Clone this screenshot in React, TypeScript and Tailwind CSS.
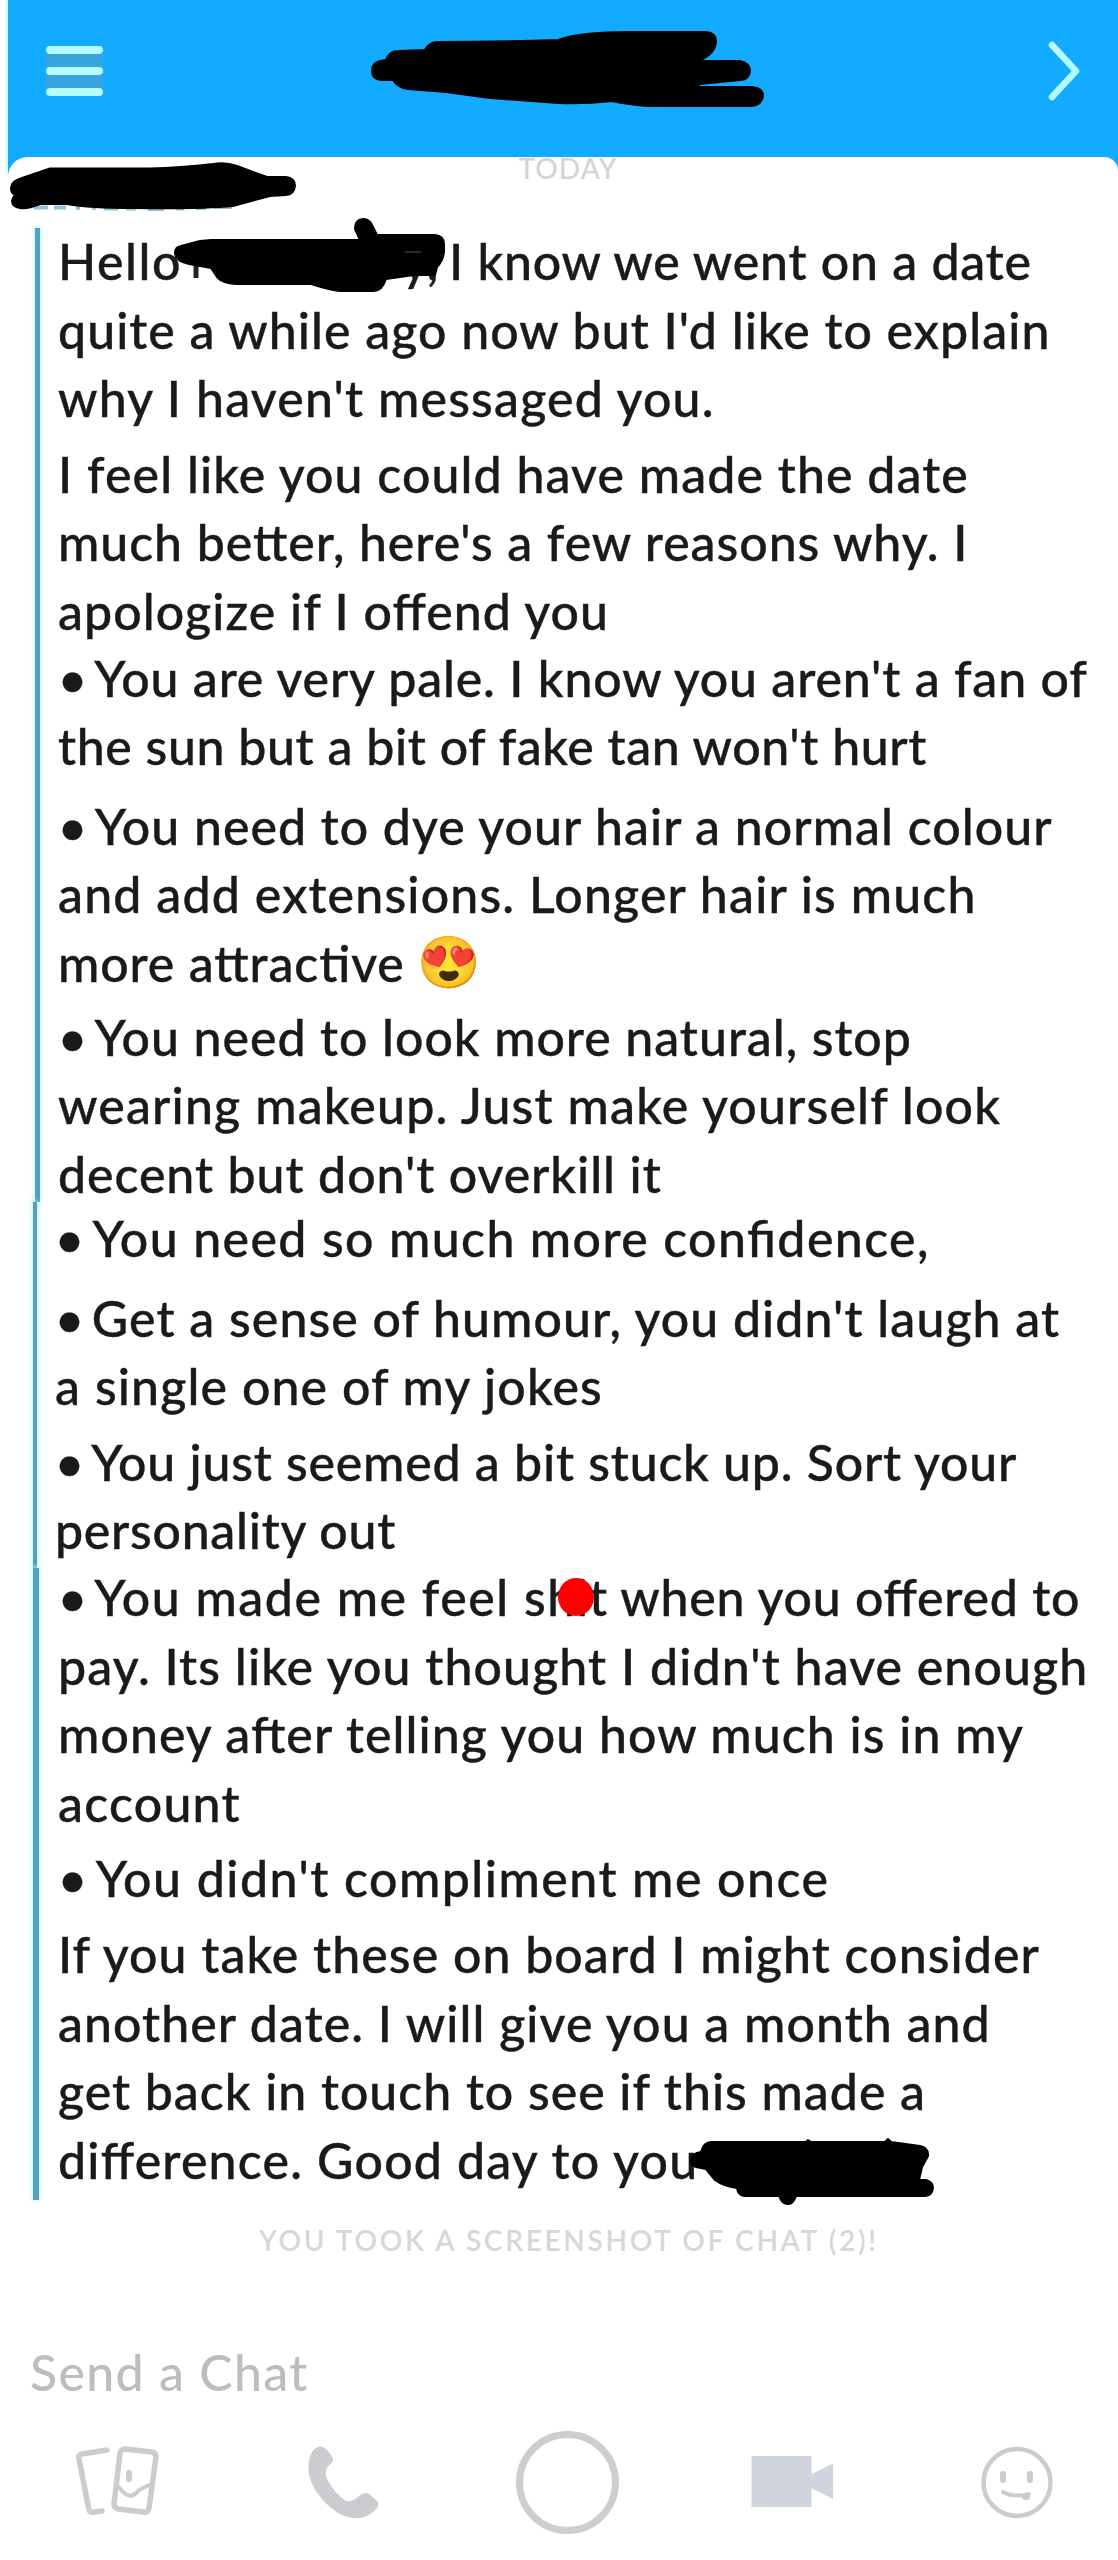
import type { ReactNode } from "react";

type LineData = { text: ReactNode; tracking: string; bullet?: boolean };
type Paragraph = { gap: string; lines: LineData[] };

const opening: Paragraph[] = [
  {
    gap: "-mt-[1px]",
    lines: [
      {
        text: (
          <span className="flex">
            <span className="w-[344px] tracking-[1.5px]">Hello</span>
            <span className="w-[47px]">y,</span>
            <span>I know we went on a date</span>
          </span>
        ),
        tracking: "tracking-[0.8px]",
      },
      { text: "quite a while ago now but I'd like to explain", tracking: "tracking-[1.05px]" },
      { text: "why I haven't messaged you.", tracking: "tracking-[1.18px]" },
    ],
  },
  {
    gap: "mt-[7px]",
    lines: [
      { text: "I feel like you could have made the date", tracking: "tracking-[1.1px]" },
      { text: "much better, here's a few reasons why. I", tracking: "tracking-[0.97px]" },
      { text: "apologize if I offend you", tracking: "tracking-[1.05px]" },
    ],
  },
  {
    gap: "-mt-[2px]",
    lines: [
      { bullet: true, text: "You are very pale. I know you aren't a fan of", tracking: "tracking-[0.86px]" },
      { text: "the sun but a bit of fake tan won't hurt", tracking: "tracking-[0.6px]" },
    ],
  },
  {
    gap: "mt-[11px]",
    lines: [
      { bullet: true, text: "You need to dye your hair a normal colour", tracking: "tracking-[1.04px]" },
      { text: "and add extensions. Longer hair is much", tracking: "tracking-[1.17px]" },
      {
        text: (
          <span className="flex">
            <span className="w-[359px]">more attractive</span>
            <span className="text-[51px] tracking-normal font-['Noto_Color_Emoji']">😍</span>
          </span>
        ),
        tracking: "tracking-[0.9px]",
      },
    ],
  },
  {
    gap: "mt-[5px]",
    lines: [
      { bullet: true, text: "You need to look more natural, stop", tracking: "tracking-[0.98px]" },
      { text: "wearing makeup. Just make yourself look", tracking: "tracking-[1.18px]" },
      { text: "decent but don't overkill it", tracking: "tracking-[0.95px]" },
    ],
  },
];

const middle: Paragraph[] = [
  {
    gap: "mt-[2px]",
    lines: [{ bullet: true, text: "You need so much more confidence,", tracking: "tracking-[1.42px]" }],
  },
  {
    gap: "mt-[11px]",
    lines: [
      { bullet: true, text: "Get a sense of humour, you didn't laugh at", tracking: "tracking-[1.08px]" },
      { text: "a single one of my jokes", tracking: "tracking-[1.14px]" },
    ],
  },
  {
    gap: "mt-[7px]",
    lines: [
      { bullet: true, text: "You just seemed a bit stuck up. Sort your", tracking: "tracking-[0.8px]" },
      { text: "personality out", tracking: "tracking-[0.74px]" },
    ],
  },
];

const closing: Paragraph[] = [
  {
    gap: "-mt-[5px]",
    lines: [
      {
        bullet: true,
        text: (
          <>
            <span className="tracking-[1.55px]">You made me feel s</span>
            <span>hit when you offered to</span>
          </>
        ),
        tracking: "tracking-[0.8px]",
      },
      { text: "pay. Its like you thought I didn't have enough", tracking: "tracking-[1.1px]" },
      { text: "money after telling you how much is in my", tracking: "tracking-[1.07px]" },
      { text: "account", tracking: "tracking-[1.25px]" },
    ],
  },
  {
    gap: "mt-[7px]",
    lines: [{ bullet: true, text: "You didn't compliment me once", tracking: "tracking-[1.5px]" }],
  },
  {
    gap: "mt-[7px]",
    lines: [
      { text: "If you take these on board I might consider", tracking: "tracking-[1.07px]" },
      { text: "another date. I will give you a month and", tracking: "tracking-[1.06px]" },
      { text: "get back in touch to see if this made a", tracking: "tracking-[1.01px]" },
      { text: "difference. Good day to you", tracking: "tracking-[1.22px]" },
    ],
  },
];

function Block({
  size,
  bar,
  pad,
  paragraphs,
}: {
  size: string;
  bar: string;
  pad: string;
  paragraphs: Paragraph[];
}) {
  return (
    <section className={`relative flex ${size}`}>
      <div className={`shrink-0 bg-[#55a0bc] shadow-[0_0_4px_1px_#b5f3ff] ${bar}`} />
      <div className={`flex flex-col ${pad}`}>
        {paragraphs.map((p, i) => (
          <div key={i} className={p.gap}>
            {p.lines.map((line, j) => (
              <div key={j} className={`h-[68.6px] leading-[68.6px] whitespace-nowrap ${line.tracking}`}>
                {line.bullet && <span className="-mr-[7px]">• </span>}
                {line.text}
              </div>
            ))}
          </div>
        ))}
      </div>
    </section>
  );
}

function Header() {
  return (
    <header className="ml-[8px] flex h-[174px] shrink-0 items-start justify-between bg-[#12abff] pl-[38px] pr-[35px] shadow-[-1px_0_4px_#a8f4ff]">
      <div className="mt-[46px] flex w-[57px] flex-col gap-[13px] bg-[#36a4dd]">
        <span className="h-[8px] rounded-full bg-[#b4fcff]" />
        <span className="h-[8px] rounded-full bg-[#b4fcff]" />
        <span className="h-[8px] rounded-full bg-[#b4fcff]" />
      </div>
      <svg className="mt-[38px] h-[66px] w-[40px]" viewBox="0 0 40 66" fill="none">
        <path d="M9 7 33 33 9 59" stroke="#b4fcff" strokeWidth="6.5" strokeLinecap="round" strokeLinejoin="round" />
      </svg>
    </header>
  );
}

function Scribbles() {
  return (
    <svg className="pointer-events-none absolute inset-0 z-20 h-[2560px] w-[1118px]" viewBox="0 0 1118 2560">
      <path d="M34 207.500H48M54 207.500H66M76 208H80M92 208H96M104 208.500H118M126 208.500H136M148 209H164M176 208.500H184M196 208H206M214 207H232" stroke="#8cc4d6" strokeWidth="4" />
      <path d="M196 262V278" stroke="#222" strokeWidth="5" />
      <g fill="#000" stroke="#000" strokeWidth="2" strokeLinejoin="round">
        <path d="M372 71Q372 63 380 61L386 60Q389 51 398 51L425 50Q429 42 438 42Q500 42 558 40Q579 32 629 32H706Q716 33 716 41Q716 54 698 61H740Q750 63 750 71Q749 80 741 80L700 84L696 87H752Q763 88 763 96Q762 105 752 106L647 106Q625 104 612 101Q585 104 558 103L490 98L446 92L408 89Q398 88 393 80H381Q372 79 372 71Z" />
        <path d="M11 188Q11 181 22 178L50 168.500H150Q180 168 213 164Q226 162 237 166L267 177H286Q295 178 295 186Q294 195 286 195L270 196L233 206Q200 209 133 208Q90 208 67 204L40 204Q28 209 20 208Q12 207 12 201Q13 197 15 195Q11 193 11 188Z" />
        <path d="M175 253Q175 247 181 246L200 241L211 240H360L355 229Q355 219 364 219Q369 219 372 225L377 235H435Q444 236 444 244V252Q443 261 437 267L435 275H414L386 279Q382 291 374 291H340Q330 290 311 284H236Q222 283 217 277L211 268L189 264Q175 261 175 253Z" />
        <path d="M691 2160Q692 2153 701 2152Q704 2142 711 2142H806L808 2140L811 2142H885L888 2139L891 2142L920 2146Q929 2148 928 2156L922 2167L919 2180H926Q933 2182 933 2188Q932 2196 925 2196H796Q793 2205 787 2204Q782 2204 779 2196H744Q738 2195 737 2188Q723 2186 715 2180L706 2169L696 2167Q691 2166 691 2160Z" />
      </g>
      <path d="M405 252H421" stroke="#2a2a2a" strokeWidth="2" />
      <ellipse cx="576" cy="1597" rx="18" ry="19" fill="#f00" />
    </svg>
  );
}

function Toolbar() {
  return (
    <nav className="mt-[23px] flex h-[106px] items-center text-[#cbccd0]">
      <svg className="ml-[72px] h-[76px] w-[90px]" viewBox="72 2443 90 76" fill="none" stroke="currentColor" strokeWidth="5.5" strokeLinecap="round" strokeLinejoin="round">
        <path d="M107 2449 82 2453Q78 2454 79 2458L89 2509Q90 2512 94 2511L102 2510" />
        <path d="M125 2448 152 2451Q156 2452 156 2456L149 2507Q148 2512 144 2511L118 2508Q114 2507 114 2503L120 2452Q121 2448 125 2448Z" />
        <path d="M129 2472V2478" strokeWidth="6" />
        <path d="M119 2486Q124 2494 131 2495Q135 2494 139 2489L149 2484" strokeWidth="4" />
      </svg>
      <svg className="ml-[143px] h-[76px] w-[78px]" viewBox="305 2443 78 76" fill="currentColor">
        <path d="M311 2453Q315 2445 321 2445.500Q327 2447 333 2457Q334 2461 328 2465Q324 2470 327 2478Q334 2492 346 2500Q354 2501 359 2495Q365 2490 369 2493L377 2500Q380 2504 376 2508Q370 2515 360 2517Q348 2518 338 2512Q320 2500 312 2483Q305 2466 311 2453Z" />
      </svg>
      <div className="ml-[133px] size-[103px] rounded-full border-[7px] border-[#cdced2]" />
      <svg className="ml-[128px] h-[60px] w-[90px] text-[#d0d4dc]" viewBox="748 2452 90 60" fill="currentColor">
        <path d="M752.500 2456H812.500V2474L834 2463.500V2499L812.500 2488V2507H752.500Z" />
      </svg>
      <svg className="ml-[142px] h-[76px] w-[76px]" viewBox="980 2444 76 76" fill="none" stroke="currentColor" strokeLinecap="round">
        <ellipse cx="1018" cy="2482.500" rx="33.500" ry="33.500" strokeWidth="4.500" />
        <path d="M1004 2474V2480M1031 2474V2480" strokeWidth="6" />
        <path d="M1004 2492Q1015 2498 1030 2494" strokeWidth="4" />
        <path d="M1026 2497H1028" strokeWidth="6" />
      </svg>
    </nav>
  );
}

export default function App() {
  return (
    <div className="relative flex h-[2560px] w-[1118px] flex-col overflow-hidden bg-white font-['Lato','Noto_Color_Emoji',sans-serif]">
      <Header />
      <div className="relative z-10 ml-[8px] -mt-[17px] flex h-[71px] shrink-0 justify-center rounded-tl-[20px] rounded-tr-[14px] bg-white pl-[10px] text-[28px] font-medium tracking-[1.1px] text-[#d4d4d4]">
        <span className="h-[34px] leading-[23px]">TODAY</span>
      </div>
      <main className="relative z-10 text-[50px] font-medium text-[#1a1a1a] [font-feature-settings:'liga'_1] [-webkit-text-stroke:0.4px_#1a1a1a]">
        <Block size="h-[974px] ml-[35px]" bar="w-[5px]" pad="ml-[18px]" paragraphs={opening} />
        <Block size="h-[366px] ml-[33px]" bar="w-[4px]" pad="ml-[18px]" paragraphs={middle} />
        <Block size="h-[632px] ml-[33px]" bar="w-[6px]" pad="ml-[19px]" paragraphs={closing} />
      </main>
      <p className="mt-[23px] ml-[259px] h-[35px] text-[28px] leading-[34px] font-semibold tracking-[2.7px] whitespace-nowrap text-[#d6d7db]">
        YOU TOOK A SCREENSHOT OF CHAT (2)!
      </p>
      <div className="mt-[84px] ml-[30px] h-[64px] text-[50px] leading-[60px] font-medium tracking-[1.35px] whitespace-nowrap text-[#bcbdbf]">
        Send a Chat
      </div>
      <Toolbar />
      <Scribbles />
    </div>
  );
}
